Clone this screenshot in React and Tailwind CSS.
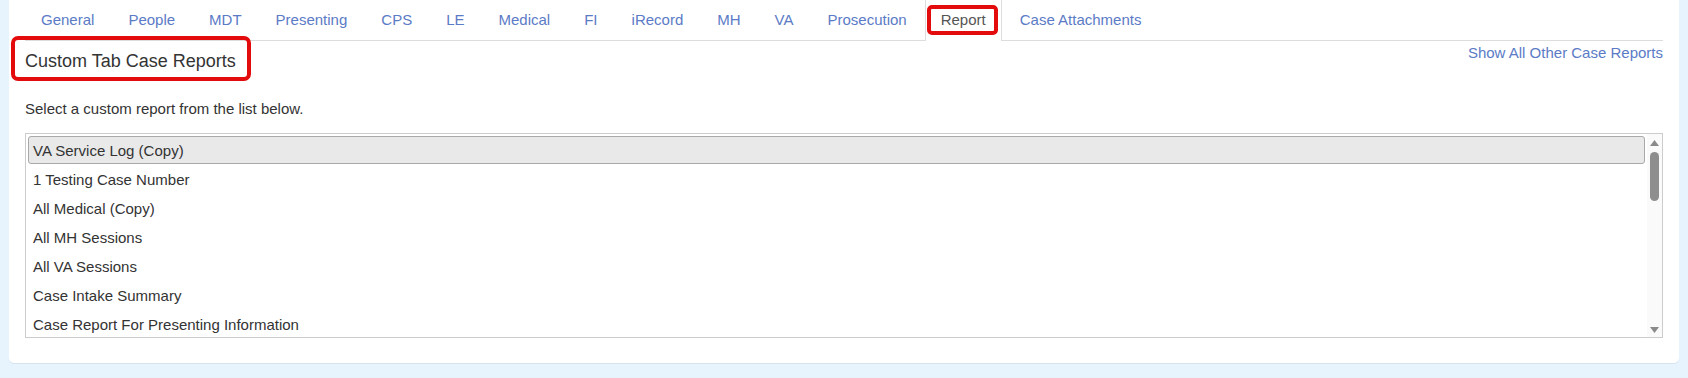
import React from "react";

const tabs = [
  "General",
  "People",
  "MDT",
  "Presenting",
  "CPS",
  "LE",
  "Medical",
  "FI",
  "iRecord",
  "MH",
  "VA",
  "Prosecution",
  "Report",
  "Case Attachments",
];

const items = [
  "VA Service Log (Copy)",
  "1 Testing Case Number",
  "All Medical (Copy)",
  "All MH Sessions",
  "All VA Sessions",
  "Case Intake Summary",
  "Case Report For Presenting Information",
];

export default function App() {
  return (
    <div
      className="min-h-[378px] bg-[#e8f4fd] px-[9px] pb-[15px]"
      style={{ fontFamily: '"Liberation Sans", Arial, sans-serif' }}
    >
      <div className="h-[363px] rounded-b-[5px] bg-white px-4 shadow-[0_1px_0_#d5e4f0]">
        <nav className="flex h-[41px] border-b border-[#dddddd]">
          {tabs.map((t) => {
            const active = t === "Report";
            return (
              <div
                key={t}
                className={
                  active
                    ? "relative mr-[2px] h-[41px] whitespace-nowrap border-x border-[#dddddd] bg-white px-[15px] pt-[9px] text-[15px] leading-[21px] text-[#555555]"
                    : "mr-[2px] h-[40px] whitespace-nowrap border-x border-transparent px-[15px] pt-[9px] text-[15px] leading-[21px] text-[#5b7bc6]"
                }
              >
                {t}
                {active && (
                  <span className="pointer-events-none absolute bottom-[6px] left-[1px] right-[3px] top-[5px] rounded-[5px] border-4 border-[#e30b0b]" />
                )}
              </div>
            );
          })}
        </nav>

        <div className="flex items-start justify-between">
          <div className="relative mt-[7px] text-[18px] leading-[26px] text-[#333333]">
            Custom Tab Case Reports
            <span className="pointer-events-none absolute -bottom-[7px] -left-[14px] -right-[15px] -top-[12px] rounded-[7px] border-4 border-[#e30b0b]" />
          </div>
          <a className="mt-px text-[15px] leading-[21px] text-[#5b7bc6]">
            Show All Other Case Reports
          </a>
        </div>

        <p className="mt-[24px] text-[15px] leading-[21px] text-[#333333]">
          Select a custom report from the list below.
        </p>

        <div className="mt-[14px] flex h-[205px] border border-[#cccccc]">
          <div className="flex-1 overflow-hidden px-[2px] pt-[2px]">
            {items.map((it, i) => (
              <div
                key={it}
                className={
                  i === 0
                    ? "mb-px h-[28px] rounded-[3px] border border-[#a9a9a9] bg-[#e9e9e9] pl-[4px] pt-[2px] text-[15px] leading-[24px] text-[#333333]"
                    : "mb-px h-[28px] rounded-[3px] border border-transparent pl-[4px] pt-[2px] text-[15px] leading-[24px] text-[#333333]"
                }
              >
                {it}
              </div>
            ))}
          </div>
          <div className="flex w-[15px] flex-col items-center bg-[#fafafa] pb-[4px] pt-[6px]">
            <svg width="9" height="6" viewBox="0 0 9 6">
              <path d="M4.5 0 L9 6 L0 6 Z" fill="#8a8a8a" />
            </svg>
            <div className="mt-[6px] h-[49px] w-[9px] rounded-full bg-[#8e8e8e]" />
            <div className="flex-1" />
            <svg width="9" height="6" viewBox="0 0 9 6">
              <path d="M0 0 L9 0 L4.5 6 Z" fill="#8a8a8a" />
            </svg>
          </div>
        </div>
      </div>
    </div>
  );
}
